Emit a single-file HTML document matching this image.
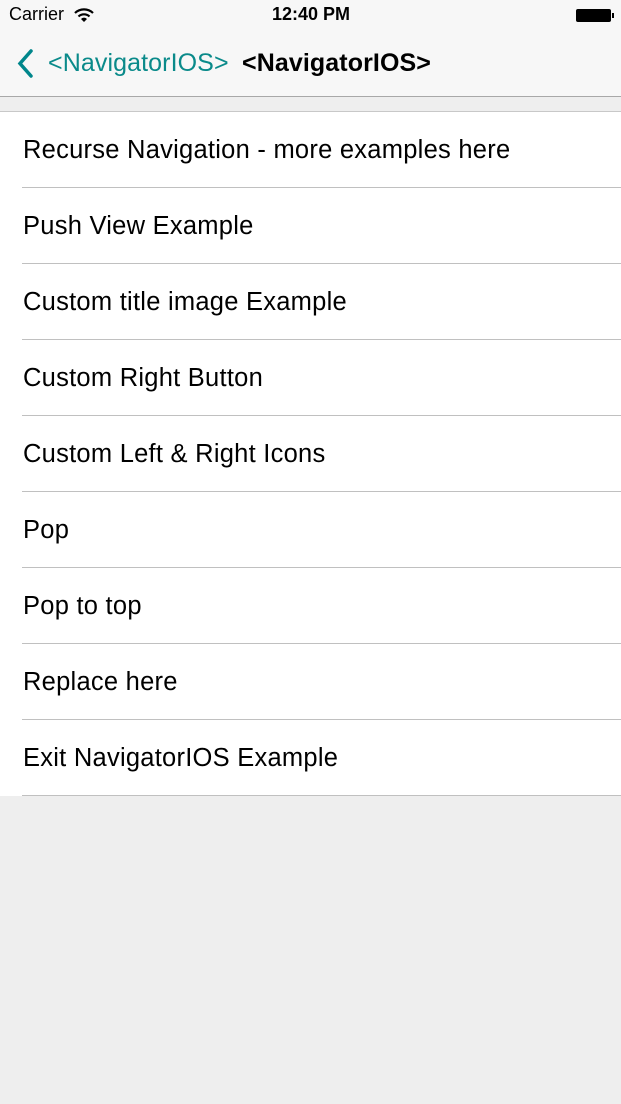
<!DOCTYPE html>
<html><head><meta charset="utf-8"><style>
body{margin:0;width:621px;height:1104px;background:#eeeeee;font-family:"Liberation Sans",Arial,sans-serif;overflow:hidden;position:relative}
.nav{position:absolute;top:0;left:0;width:621px;height:96px;background:#f7f7f7;border-bottom:1px solid #a8a8a8}
.sb{position:absolute;top:4px;font-size:18px;color:#000}
.list{position:absolute;top:111px;left:0;width:621px;background:#fff;border-top:1px solid #c8c8c8}
.row{height:75px;margin-left:22px;border-bottom:1px solid #c0c0c0;font-size:25.5px;letter-spacing:0.25px;line-height:77px;color:#000;padding-left:1px}
</style></head><body>
<div class="nav">
<div class="sb" style="left:9px">Carrier</div>
<svg style="position:absolute;left:74px;top:8px" width="20" height="14" viewBox="0 0 20 14"><path d="M1 5 A13 13 0 0 1 19 5" stroke="#000" stroke-width="2.2" fill="none"/><path d="M4.5 8.5 A8 8 0 0 1 15.5 8.5" stroke="#000" stroke-width="2.2" fill="none"/><path d="M10 14 L7 11 A4 4 0 0 1 13 11 Z" fill="#000"/></svg>
<div class="sb" style="left:272px;font-weight:bold">12:40 PM</div>
<div style="position:absolute;left:576px;top:9px;width:35px;height:13px;background:#000;border-radius:2px"></div>
<div style="position:absolute;left:612px;top:13px;width:2px;height:5px;background:#000"></div>
<svg style="position:absolute;left:16px;top:49px" width="22" height="30" viewBox="0 0 22 30"><path d="M15 2 L4 14.5 L15 27" stroke="#00868b" stroke-width="3.5" fill="none" stroke-linecap="round"/></svg>
<div style="position:absolute;left:48px;top:49px;font-size:25px;letter-spacing:0.1px;color:#0a8a8a">&lt;NavigatorIOS&gt;</div>
<div style="position:absolute;left:242px;top:49px;font-size:25px;letter-spacing:0.1px;font-weight:bold;color:#000">&lt;NavigatorIOS&gt;</div>
</div>
<div class="list">
<div class="row">Recurse Navigation - more examples here</div>
<div class="row">Push View Example</div>
<div class="row">Custom title image Example</div>
<div class="row">Custom Right Button</div>
<div class="row">Custom Left &amp; Right Icons</div>
<div class="row">Pop</div>
<div class="row">Pop to top</div>
<div class="row">Replace here</div>
<div class="row">Exit NavigatorIOS Example</div>
</div>
</body></html>
